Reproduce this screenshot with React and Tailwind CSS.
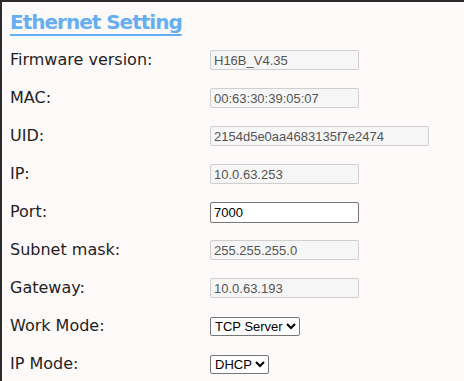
const rows = [
  { label: "Firmware version:", value: "H16B_V4.35", kind: "ro" },
  { label: "MAC:", value: "00:63:30:39:05:07", kind: "ro" },
  { label: "UID:", value: "2154d5e0aa4683135f7e2474", kind: "ro", wide: true },
  { label: "IP:", value: "10.0.63.253", kind: "ro" },
  { label: "Port:", value: "7000", kind: "edit" },
  { label: "Subnet mask:", value: "255.255.255.0", kind: "ro" },
  { label: "Gateway:", value: "10.0.63.193", kind: "ro" },
  { label: "Work Mode:", kind: "select", options: ["TCP Server", "TCP Client", "UDP"] },
  { label: "IP Mode:", kind: "select", options: ["DHCP", "Static"] },
];

export default function App() {
  return (
    <div className="h-[381px] w-[464px] overflow-hidden border-l-2 border-t-2 border-[#2b2b2b] bg-[#fffafa] font-['DejaVu_Sans',Verdana,sans-serif] text-[#1e1e1e]">
      <div className="pl-[8px]">
        <h1 className="h-[39px] pt-[8px] text-[20px] font-bold leading-[24px] tracking-[-1px] text-[#64aef4] underline decoration-[2px] underline-offset-[5px]">
          Ethernet Setting
        </h1>
        {rows.map((r) => (
          <div key={r.label} className="flex h-[38px] items-center">
            <div className="w-[200px] text-[16px]">{r.label}</div>
            {r.kind === "ro" && (
              <input
                readOnly
                disabled
                value={r.value}
                className={`h-[20px] ${r.wide ? "w-[219px]" : "w-[149px]"} rounded-[2px] border border-[#cfcfcf] bg-[#f7f6f6] px-[3px] font-['Liberation_Sans',Arial,sans-serif] text-[13px] text-[#545454]`}
              />
            )}
            {r.kind === "edit" && (
              <input
                defaultValue={r.value}
                className="h-[21px] w-[149px] rounded-[2px] border border-[#767676] bg-white px-[3px] font-['Liberation_Sans',Arial,sans-serif] text-[13px] text-black"
              />
            )}
            {r.kind === "select" && (
              <select className="h-[19px] rounded-[2px] border border-[#767676] bg-white font-['Liberation_Sans',Arial,sans-serif] text-[13px] text-black">
                {r.options.map((o) => (
                  <option key={o}>{o}</option>
                ))}
              </select>
            )}
          </div>
        ))}
      </div>
    </div>
  );
}
